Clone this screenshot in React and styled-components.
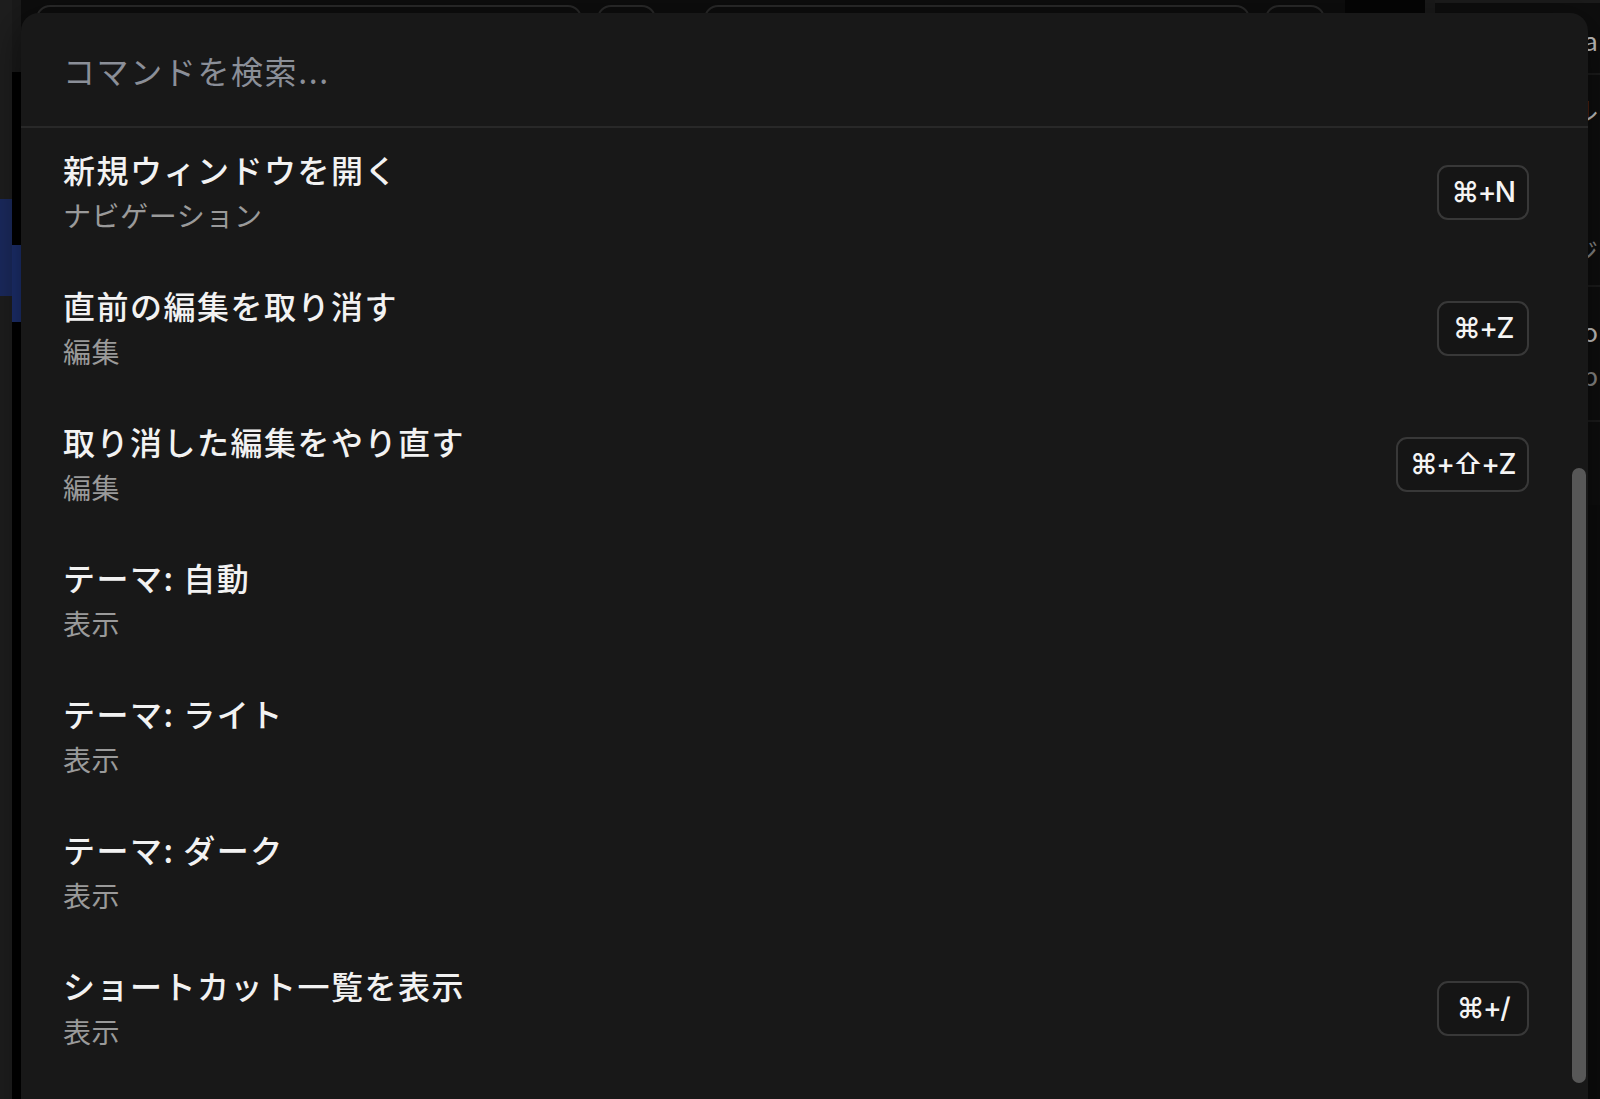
import styled, { createGlobalStyle } from "styled-components"

const GlobalStyle = createGlobalStyle`
    html, body {
        margin: 0;
        padding: 0;
        background: #0b0b0b;
    }

    body {
        font-family: "Noto Sans CJK JP", "Noto Sans", sans-serif;
        overflow: hidden;
    }
`

const commands = [
    { title: "新規ウィンドウを開く", group: "ナビゲーション", keys: "⌘+N" },
    { title: "直前の編集を取り消す", group: "編集", keys: "⌘+Z" },
    { title: "取り消した編集をやり直す", group: "編集", keys: "⌘+⇧+Z" },
    { title: "テーマ: 自動", group: "表示" },
    { title: "テーマ: ライト", group: "表示" },
    { title: "テーマ: ダーク", group: "表示" },
    { title: "ショートカット一覧を表示", group: "表示", keys: "⌘+/" },
]

// right-hand panel behind the palette, only its last letters peek out
const sideRows = [
    { lines: ["data"], height: 72, pad: 23, gap: 0 },
    { lines: ["ファイル", "メッセージ"], height: 212, pad: 21, gap: 113 },
    { lines: ["Repo", "Web"], height: 135, pad: 30, gap: 16 },
]

const Screen = styled.div`
    position: relative;
    width: 1600px;
    height: 1099px;
    overflow: hidden;
    display: flex;
    background: #0c0c0c;
`

const Rail = styled.div`
    width: 12px;
    flex-shrink: 0;
    background: #1e1e1e;
    display: flex;
    flex-direction: column;
`

const RailMark = styled.div`
    margin-top: ${props => props.$top}px;
    height: ${props => props.$height}px;
    background: ${props => props.$color};
`

const Gutter = styled.div`
    width: 9px;
    flex-shrink: 0;
    display: flex;
    flex-direction: column;
    background: #000;
`

const GutterTop = styled.div`
    height: 72px;
    background: #1a1a1a;
`

const Main = styled.div`
    flex: 1;
    display: flex;
    flex-direction: column;
`

const Toolbar = styled.div`
    height: 500px;
    display: flex;
    align-items: flex-start;
    padding: 5px 0 0 15px;
    gap: 15px;
    background: #0d0d0d;
`

const FieldBox = styled.div`
    width: ${props => props.$width}px;
    height: 44px;
    border: 2px solid #2a2a2a;
    border-radius: 14px;
    box-sizing: border-box;
    flex-shrink: 0;
`

const Spacer = styled.div`
    width: 18px;
`

const ToolbarEnd = styled.div`
    flex: 1;
    display: flex;
    align-self: stretch;
    margin-top: -5px;
    margin-left: 5px;
`

const DarkGap = styled.div`
    width: 80px;
    background: #050505;
`

const GreyStrip = styled.div`
    width: 10px;
    background: #1a1a1a;
`

const SidePanel = styled.div`
    flex: 1;
    background: #0e0e0e;
    border-top: 3px solid #1c1c1c;
    display: flex;
    flex-direction: column;
`

const SideRow = styled.div`
    height: ${props => props.$height}px;
    box-sizing: border-box;
    padding: ${props => props.$pad}px 2px 0 0;
    border-bottom: 2px solid #1c1c1c;
    display: flex;
    flex-direction: column;
    align-items: flex-end;
    gap: ${props => props.$gap}px;
`

const SideLine = styled.span`
    color: ${props => (props.$dim ? "#8a8a8a" : "#c8c8c8")};
    font-size: 26px;
    line-height: 28px;
    white-space: nowrap;
`

const Palette = styled.div`
    position: absolute;
    top: 13px;
    left: 21px;
    width: 1567px;
    height: 1120px;
    background: #181818;
    border-radius: 18px;
    display: flex;
    flex-direction: column;
    overflow: hidden;
    box-shadow: 0 10px 40px rgba(0, 0, 0, 0.5);
`

const SearchBar = styled.div`
    height: 115px;
    flex-shrink: 0;
    display: flex;
    align-items: center;
    padding: 0 42px;
    border-bottom: 2px solid #282828;
    box-sizing: border-box;
`

const SearchInput = styled.input`
    flex: 1;
    background: transparent;
    border: none;
    outline: none;
    color: #f0f0f0;
    font-family: "Noto Sans CJK JP", "Noto Sans", sans-serif;
    font-size: 32px;
    letter-spacing: 1.6px;
    padding: 0;

    &::placeholder {
        color: #8b8f98;
    }
`

const Body = styled.div`
    flex: 1;
    display: flex;
`

const List = styled.ul`
    flex: 1;
    list-style: none;
    margin: 0;
    padding: 0 43px 0 42px;
`

const Row = styled.li`
    display: flex;
    align-items: center;
    justify-content: space-between;
    padding: 18px 0 26px;
`

const Texts = styled.div`
    display: flex;
    flex-direction: column;
`

const Title = styled.span`
    color: #f2f2f2;
    font-size: 32px;
    font-weight: 500;
    letter-spacing: 1.5px;
    line-height: 46px;
`

const Group = styled.span`
    color: #9a9a9a;
    font-size: 28px;
    letter-spacing: 0.6px;
    line-height: 46px;
`

const Kbd = styled.kbd`
    min-width: 92px;
    height: 55px;
    box-sizing: border-box;
    padding: 0 12px;
    display: flex;
    align-items: center;
    justify-content: center;
    border: 2px solid #383838;
    border-radius: 11px;
    background: #151515;
    color: #f4f4f4;
    font-family: "Inter", "DejaVu Sans", sans-serif;
    font-size: 28px;
    font-weight: 500;
    letter-spacing: -1.5px;
`

const ScrollTrack = styled.div`
    width: 16px;
    flex-shrink: 0;
    padding-top: 340px;
    box-sizing: border-box;
`

const ScrollThumb = styled.div`
    width: 14px;
    height: 615px;
    border-radius: 8px;
    background: #575757;
`

export default function App() {
    return (
        <>
            <GlobalStyle />
            <Screen>
                <Rail>
                    <RailMark $top={199} $height={97} $color="#1b2a5e" />
                </Rail>
                <Gutter>
                    <GutterTop />
                    <RailMark $top={173} $height={77} $color="#1d3070" />
                </Gutter>
                <Main>
                    <Toolbar>
                        <FieldBox $width={546} />
                        <FieldBox $width={59} />
                        <Spacer />
                        <FieldBox $width={546} />
                        <FieldBox $width={60} />
                        <ToolbarEnd>
                            <DarkGap />
                            <GreyStrip />
                            <SidePanel>
                                {sideRows.map(row => (
                                    <SideRow
                                        key={row.lines[0]}
                                        $height={row.height}
                                        $pad={row.pad}
                                        $gap={row.gap}
                                    >
                                        {row.lines.map((line, j) => (
                                            <SideLine key={line} $dim={j > 0}>{line}</SideLine>
                                        ))}
                                    </SideRow>
                                ))}
                            </SidePanel>
                        </ToolbarEnd>
                    </Toolbar>
                </Main>

                <Palette>
                    <SearchBar>
                        <SearchInput placeholder="コマンドを検索..." />
                    </SearchBar>
                    <Body>
                        <List>
                            {commands.map(cmd => (
                                <Row key={cmd.title}>
                                    <Texts>
                                        <Title>{cmd.title}</Title>
                                        <Group>{cmd.group}</Group>
                                    </Texts>
                                    {cmd.keys && <Kbd>{cmd.keys}</Kbd>}
                                </Row>
                            ))}
                        </List>
                        <ScrollTrack>
                            <ScrollThumb />
                        </ScrollTrack>
                    </Body>
                </Palette>
            </Screen>
        </>
    )
}
